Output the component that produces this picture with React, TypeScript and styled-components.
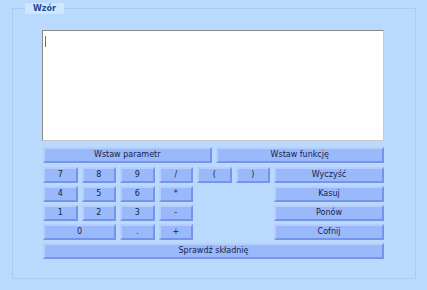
import * as React from 'react';
import styled, { createGlobalStyle } from 'styled-components';

const GlobalStyle = createGlobalStyle`
  html, body {
    margin: 0;
    padding: 0;
    background: #b9dafc;
  }
  body {
    font-family: 'DejaVu Sans', Verdana, sans-serif;
  }
`;

const keypad: { label: string; span?: number }[][] = [
  [{ label: '7' }, { label: '8' }, { label: '9' }, { label: '/' }, { label: '(' }, { label: ')' }],
  [{ label: '4' }, { label: '5' }, { label: '6' }, { label: '*' }],
  [{ label: '1' }, { label: '2' }, { label: '3' }, { label: '-' }],
  [{ label: '0', span: 2 }, { label: '.' }, { label: '+' }],
];

const actions = ['Wyczyść', 'Kasuj', 'Ponów', 'Cofnij'];

export default () => {
  return (
    <Page>
      <GlobalStyle />
      <Frame>
        <Legend>Wzór</Legend>
        <EditorWrap>
          <Editor spellCheck={false} />
          <Caret />
        </EditorWrap>
        <InsertRow>
          <Btn>Wstaw parametr</Btn>
          <Btn>Wstaw funkcję</Btn>
        </InsertRow>
        <Keys>
          {keypad.map((row, r) => (
            <React.Fragment key={r}>
              {row.map((k) => (
                <Btn key={k.label} $span={k.span} style={{ gridRow: r + 1 }}>
                  {k.label}
                </Btn>
              ))}
              <ActionBtn style={{ gridRow: r + 1 }}>{actions[r]}</ActionBtn>
            </React.Fragment>
          ))}
          <WideBtn>Sprawdź składnię</WideBtn>
        </Keys>
      </Frame>
    </Page>
  );
};

const Page = styled.div`
  width: 427px;
  height: 290px;
  padding: 3px 0 0 12px;
  box-sizing: border-box;
`;

const Frame = styled.fieldset`
  width: 404px;
  height: 276px;
  box-sizing: border-box;
  margin: 0;
  padding: 16px 31px 18px 29px;
  border: 1px solid #a6cdf6;
  display: flex;
  flex-direction: column;
`;

const Legend = styled.legend`
  margin-left: -17px;
  padding: 0 8px;
  background: #cfe6fe;
  color: #1f4b94;
  font-weight: bold;
  font-size: 8px;
  line-height: 11px;
`;

const EditorWrap = styled.div`
  position: relative;
  width: 342px;
  height: 111px;
`;

const Editor = styled.textarea`
  display: block;
  width: 100%;
  height: 100%;
  box-sizing: border-box;
  margin: 0;
  resize: none;
  background: #fff;
  border-style: solid;
  border-width: 1px;
  border-color: #8a8a8a #c8c8c8 #c8c8c8 #8a8a8a;
  outline: none;
  caret-color: #707070;
  font-family: 'DejaVu Sans', Verdana, sans-serif;
  font-size: 9px;
  padding: 4px;
`;

const Caret = styled.span`
  position: absolute;
  left: 3px;
  top: 6px;
  width: 1px;
  height: 11px;
  background: #707070;
  pointer-events: none;
`;

const InsertRow = styled.div`
  display: flex;
  gap: 4px;
  margin: 6px 0 4px 1px;
  width: 341px;
`;

const Btn = styled.button<{ $span?: number }>`
  flex: 1;
  height: 16px;
  box-sizing: border-box;
  margin: 0;
  padding: 0;
  background: #9ab9fb;
  border-style: solid;
  border-width: 2px;
  border-color: #b6cdfd #7594ea #7594ea #b6cdfd;
  color: #14244a;
  font-family: 'DejaVu Sans', Verdana, sans-serif;
  font-size: 8px;
  line-height: 12px;
  cursor: pointer;
  grid-column: ${(p) => (p.$span ? `span ${p.$span}` : 'auto')};
`;

const ActionBtn = styled(Btn)`
  grid-column: 7;
`;

const WideBtn = styled(Btn)`
  grid-column: 1 / -1;
  grid-row: 5;
`;

const Keys = styled.div`
  display: grid;
  grid-template-columns: repeat(6, 34.5px) 1fr;
  grid-auto-rows: 16px;
  column-gap: 4px;
  row-gap: 3px;
  width: 341px;
  margin-left: 1px;
`;
